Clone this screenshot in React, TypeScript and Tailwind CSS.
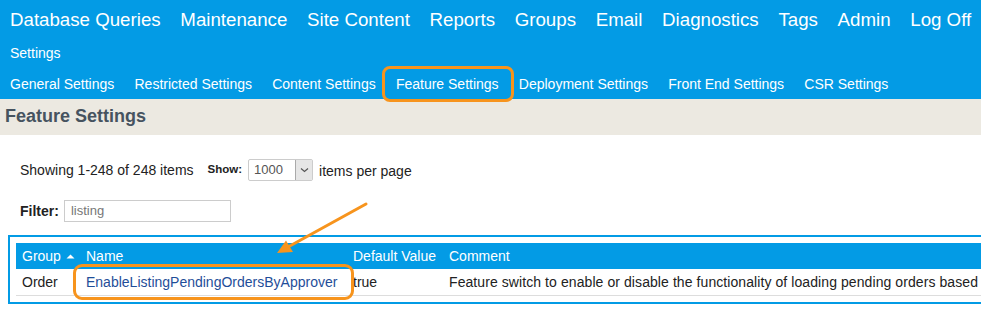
import React from "react";

const topNav = ["Database Queries", "Maintenance", "Site Content", "Reports", "Groups", "Email", "Diagnostics", "Tags", "Admin", "Log Off"];
const subNav = ["General Settings", "Restricted Settings", "Content Settings", "Feature Settings", "Deployment Settings", "Front End Settings", "CSR Settings"];

export default function App() {
  return (
    <div className="relative w-[981px] h-[316px] overflow-hidden bg-white font-['Liberation_Sans',Arial,sans-serif]">
      {/* Blue header */}
      <div className="h-[99px] bg-[#039be5] text-white">
        <nav className="flex gap-[19.7px] pl-[10px] pt-[6px] text-[18.7px] leading-[28px] whitespace-nowrap">
          {topNav.map((t) => (
            <span key={t}>{t}</span>
          ))}
        </nav>
        <div className="pl-[10px] mt-[9px] text-[14px] leading-[20px]">Settings</div>
        <nav className="flex gap-[20.2px] pl-[10px] mt-[11px] text-[14px] leading-[20px] whitespace-nowrap">
          {subNav.map((t) => (
            <span key={t}>{t}</span>
          ))}
        </nav>
      </div>

      {/* Title band */}
      <div className="h-[36px] bg-[#ece9e1] pl-[5px] text-[18px] leading-[35px] font-bold text-[#46535f]">
        Feature Settings
      </div>

      {/* Controls */}
      <div className="pl-[20px] pt-[24px] text-[#222]">
        <div className="flex items-center h-[22px] text-[14px] whitespace-nowrap">
          <span>Showing 1-248 of 248 items</span>
          <span className="ml-[14px] text-[11.5px] font-bold">Show:</span>
          <div className="ml-[6px] flex h-[22px] w-[65px] items-stretch rounded-[2px] border border-[#cccccc] bg-white">
            <span className="flex-1 pl-[5px] text-[13px] leading-[20px] text-[#555]">1000</span>
            <span className="flex w-[17px] items-center justify-center border-l border-[#aaaaaa] bg-[#e6e6e6]">
              <svg width="9" height="6" viewBox="0 0 9 6">
                <path d="M1 1.5 L4.5 4.5 L8 1.5" fill="none" stroke="#555" strokeWidth="1.2" />
              </svg>
            </span>
          </div>
          <span className="ml-[6px] mt-[3px]">items per page</span>
        </div>

        <div className="mt-[19px] flex items-center h-[22px]">
          <span className="text-[14px] font-bold">Filter:</span>
          <div className="ml-[5px] h-[22px] w-[167px] border border-[#cccccc] pl-[6px] text-[13px] leading-[20px] text-[#777]">
            listing
          </div>
        </div>
      </div>

      {/* Table */}
      <div className="mt-[13px] ml-[8px] w-[1200px] border-2 border-[#039be5] p-[6px] text-[14px]">
        <div className="flex h-[26px] bg-[#039be5] text-white leading-[26px] whitespace-nowrap">
          <div className="w-[64px] shrink-0 pl-[6px] flex items-center">
            <span>Group</span>
            <svg className="ml-[5px]" width="9" height="5" viewBox="0 0 9 5">
              <path d="M0.5 4.5 L4.5 0.5 L8.5 4.5 Z" fill="white" />
            </svg>
          </div>
          <div className="w-[267px] shrink-0 pl-[6px]">Name</div>
          <div className="w-[96px] shrink-0 pl-[6px]">Default Value</div>
          <div className="flex-1 pl-[6px]">Comment</div>
        </div>
        <div className="flex h-[27px] border-b border-[#dddddd] leading-[26px] text-[#222] whitespace-nowrap">
          <div className="w-[64px] shrink-0 pl-[6px]">Order</div>
          <div className="w-[267px] shrink-0 pl-[6px] text-[#1f4e99]">EnableListingPendingOrdersByApprover</div>
          <div className="w-[96px] shrink-0 pl-[6px]">true</div>
          <div className="flex-1 pl-[6px] tracking-[0.08px]">
            Feature switch to enable or disable the functionality of loading pending orders based
          </div>
        </div>
      </div>

      {/* Annotations */}
      <div className="absolute left-[382px] top-[66px] w-[132px] h-[36px] rounded-[8px] border-[3.5px] border-[#f7941d]" />
      <div className="absolute left-[73px] top-[264px] w-[281px] h-[36px] rounded-[9px] border-[3.5px] border-[#f7941d]" />
      <svg className="absolute left-0 top-0" width="981" height="316" viewBox="0 0 981 316">
        <line x1="366" y1="204" x2="288" y2="247" stroke="#f7941d" strokeWidth="3" strokeLinecap="round" />
        <polygon points="277,253 286,240.5 293,252" fill="#f7941d" />
      </svg>
    </div>
  );
}
